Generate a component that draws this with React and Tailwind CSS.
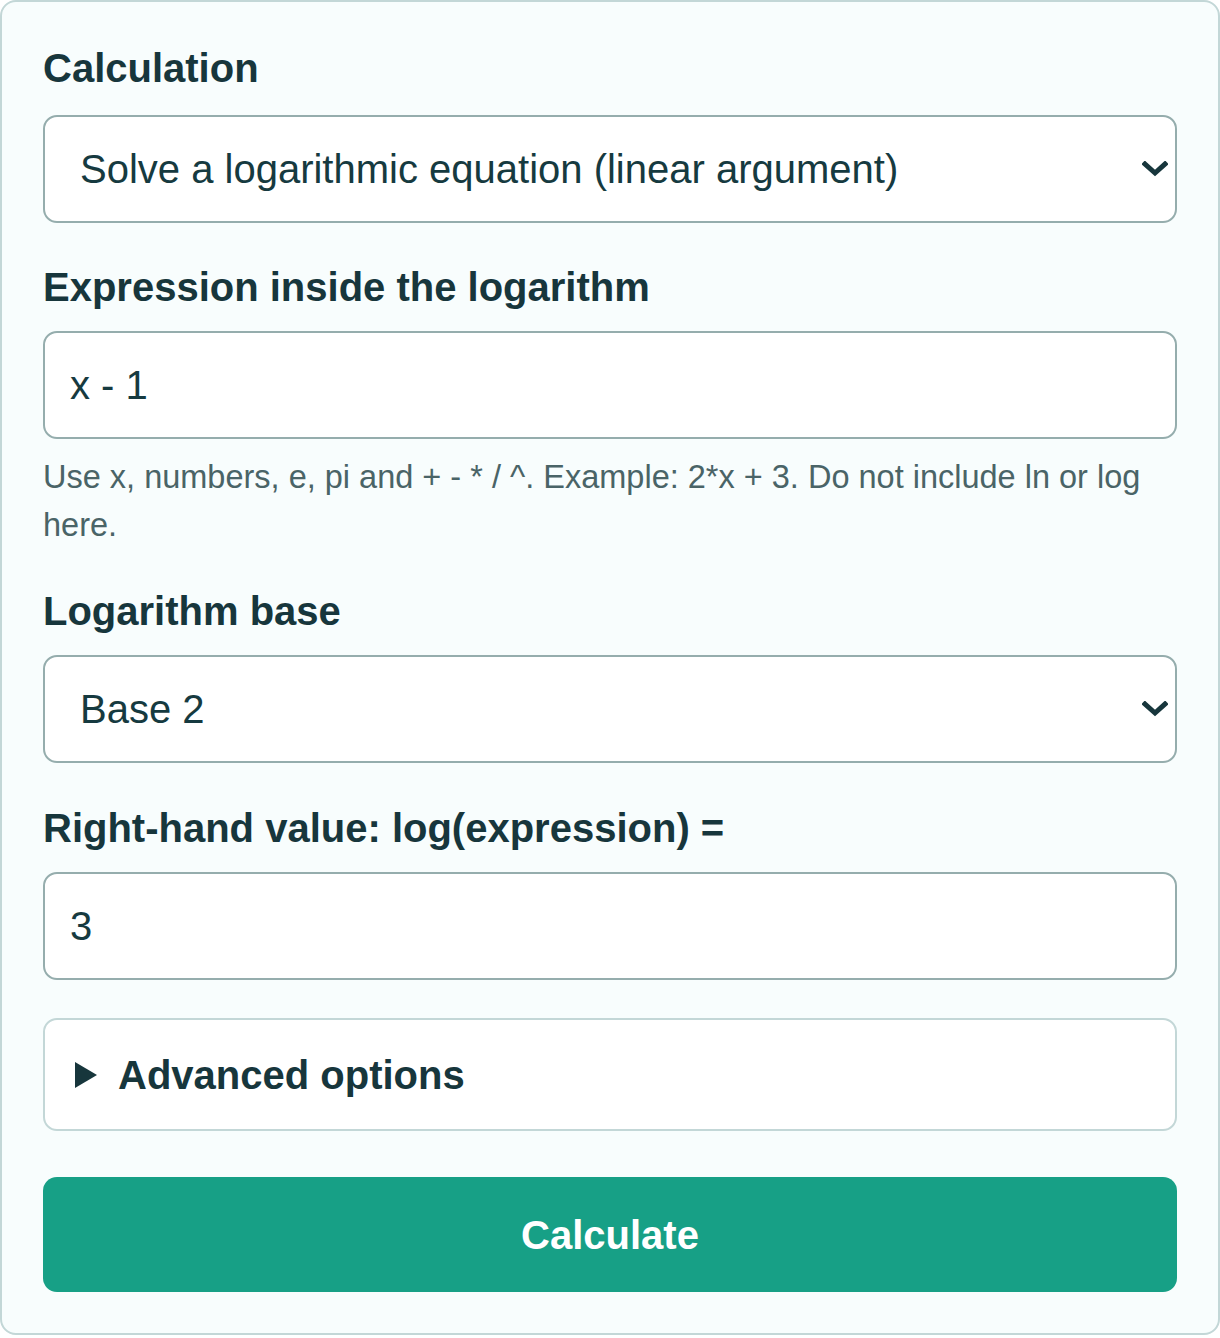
import React from "react";

const font = { fontFamily: '"Liberation Sans", Arial, sans-serif' };

function Chevron() {
  return (
    <svg
      className="pointer-events-none absolute right-[9px] top-1/2 -translate-y-1/2"
      width="26"
      height="16"
      viewBox="0 0 26 16"
      fill="none"
    >
      <path d="M3 3 L13 12 L23 3" stroke="#17363c" strokeWidth="5" strokeLinecap="square" strokeLinejoin="miter" />
    </svg>
  );
}

function Label({ children, first }) {
  return (
    <div
      className={
        first
          ? "text-[40px] font-bold leading-[46px] text-[#17363c] mb-[24px]"
          : "text-[40px] font-bold leading-[46px] text-[#17363c] mb-[21px]"
      }
    >
      {children}
    </div>
  );
}

function SelectBox({ value }) {
  return (
    <div className="relative">
      <select
        defaultValue={value}
        className="block w-full h-[108px] appearance-none rounded-[14px] border-2 border-[#95adad] bg-white pl-[35px] pr-[60px] text-[40px] leading-[46px] text-[#163a40] outline-none"
        style={font}
      >
        <option>{value}</option>
      </select>
      <Chevron />
    </div>
  );
}

function InputBox({ value }) {
  return (
    <input
      readOnly
      value={value}
      className="block w-full h-[108px] rounded-[14px] border-2 border-[#95adad] bg-white px-[25px] text-[40px] leading-[46px] text-[#163a40] outline-none"
      style={font}
    />
  );
}

export default function App() {
  return (
    <div className="bg-white" style={font}>
      <div className="w-[1220px] rounded-[16px] border-2 border-[#c3d7d7] bg-[#f8fdfd] px-[41px] pt-[43px] pb-[41px] flex flex-col">
        <Label first>Calculation</Label>
        <SelectBox value="Solve a logarithmic equation (linear argument)" />

        <div className="mt-[41px]">
          <Label>Expression inside the logarithm</Label>
          <InputBox value="x - 1" />
          <p className="mt-[14px] text-[32.5px] leading-[48px] text-[#4a6467]">
            Use x, numbers, e, pi and + - * / ^. Example: 2*x + 3. Do not include ln or log here.
          </p>
        </div>

        <div className="mt-[39px]">
          <Label>Logarithm base</Label>
          <SelectBox value="Base 2" />
        </div>

        <div className="mt-[42px]">
          <Label>Right-hand value: log(expression) =</Label>
          <InputBox value="3" />
        </div>

        <div className="mt-[38px] h-[113px] rounded-[14px] border-2 border-[#c3d7d7] bg-white flex items-center pl-[30px]">
          <svg width="22" height="26" viewBox="0 0 22 26" className="mr-[21px]">
            <path d="M0 0 L22 13 L0 26 Z" fill="#17363c" />
          </svg>
          <span className="text-[40px] font-bold leading-[46px] text-[#17363c]">Advanced options</span>
        </div>

        <button
          className="mt-[46px] h-[115px] w-full rounded-[14px] bg-[#17a086] text-white text-[40px] font-bold leading-[46px]"
          style={font}
        >
          Calculate
        </button>
      </div>
    </div>
  );
}
